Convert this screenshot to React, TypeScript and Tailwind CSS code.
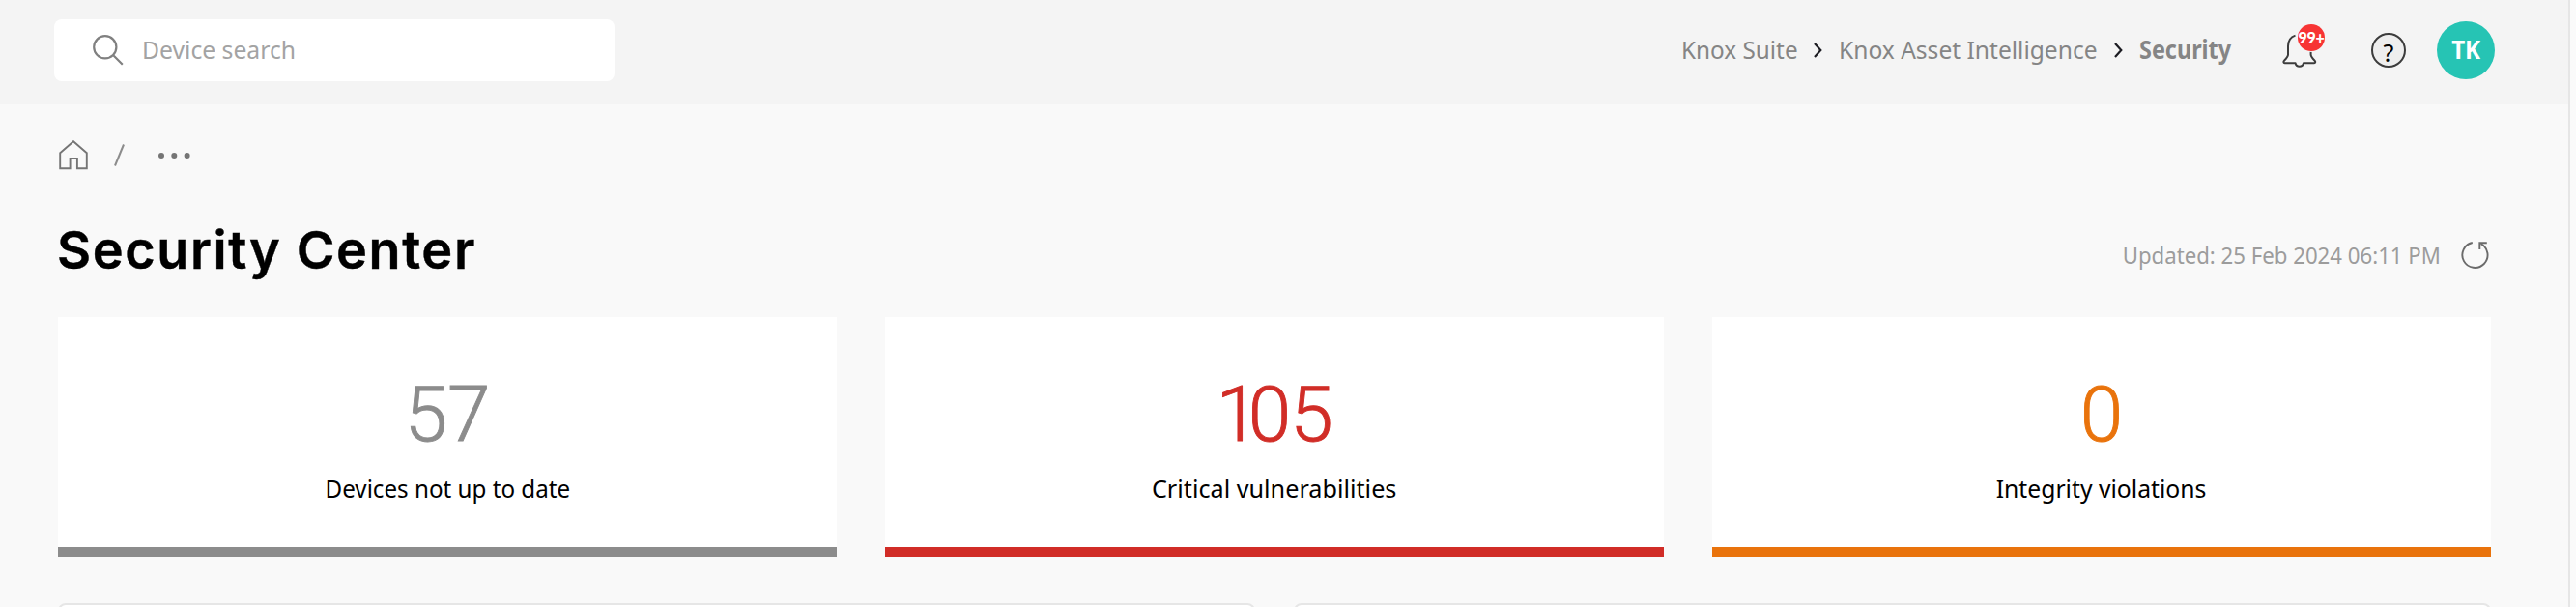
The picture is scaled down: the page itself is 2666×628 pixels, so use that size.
import React from "react";

function SearchIcon() {
  return (
    <svg className="size-8 shrink-0" viewBox="0 0 32 32" fill="none" stroke="#808080" strokeWidth="2.2">
      <circle cx="12.8" cy="12.8" r="11.6" />
      <path d="M21 21l9.8 9.8" />
    </svg>
  );
}

function HomeIcon() {
  return (
    <svg className="h-[31px] w-[30px] shrink-0" viewBox="0 0 30 31" fill="none" stroke="#757575" strokeWidth="1.9">
      <path d="M1.2 13.2L15 1.2l13.8 12v16h-9.9V19h-7.3v10.2H1.2z" />
    </svg>
  );
}

function BellIcon() {
  return (
    <svg className="h-[35px] w-[36px]" viewBox="0 0 36 35" fill="none" stroke="#3c3c3c" strokeWidth="2" strokeLinejoin="round">
      <path d="M13.5 1.6C8.5 3.2 6 7.5 6 13v8.5c0 2-1.500 3.800-4 6.200-1 1-.8 2.600.6 2.600h11c.4 2 1.700 3.500 4.200 3.500s3.800-1.500 4.200-3.500h11c1.400 0 1.600-1.600.6-2.600-2.500-2.400-4-4.200-4-6.200V18" />
    </svg>
  );
}

function Chevron() {
  return (
    <svg className="h-4 w-[9px] shrink-0" viewBox="0 0 9 16" fill="none" stroke="#1c1c22" strokeWidth="2.2">
      <path d="M1 1l6.3 7L1 15" />
    </svg>
  );
}

function RefreshIcon() {
  return (
    <svg className="h-[30px] w-[30px] shrink-0" viewBox="0 0 30 30" fill="none" stroke="#6b6b6b" strokeWidth="1.9">
      <path d="M11.8 2A13.1 13.1 0 1 0 20.5 3.2" />
      <path d="M19.3 9V2.2h7.5" />
    </svg>
  );
}

type Stat = { value: string; label: string; color: string; bar: string; fit: string };

const stats: Stat[] = [
  { value: "57", label: "Devices not up to date", color: "text-[#8c8c8c]", bar: "bg-[#8c8c8c]", fit: "scale-x-[0.93]" },
  { value: "105", label: "Critical vulnerabilities", color: "text-[#d12d27]", bar: "bg-[#d12d27]", fit: "scale-x-[0.97]" },
  { value: "0", label: "Integrity violations", color: "text-[#e9730c]", bar: "bg-[#e9730c]", fit: "scale-x-[0.95]" },
];

function StatCard({ value, label, color, bar, fit }: Stat) {
  return (
    <div className="flex h-[248px] flex-col bg-white">
      <div className="flex flex-1 flex-col items-center pt-[61px]">
        <div className={`font-['Roboto',sans-serif] text-[80px] leading-[80px] font-light [-webkit-text-stroke:0.9px_currentColor] ${color}`}>
          {value.split("").map((d, i) => (
            <span key={i} className={d === "1" ? "tracking-[-11px]" : i === 1 && d === "0" ? "mr-[3px] tracking-[-4px]" : undefined}>{d}</span>
          ))}
        </div>
        <div className={`mt-[18px] text-[26px] leading-9 text-black ${fit}`}>{label}</div>
      </div>
      <div className={`h-2.5 ${bar}`} />
    </div>
  );
}

export default function App() {
  return (
    <div className="flex h-[628px] w-[2666px] overflow-hidden bg-[#fafafa] font-['Noto_Sans',sans-serif]">
      <div className="w-[2660px] border-r-2 border-[#e6e6e6] bg-[#f9f9f9]">
        <header className="flex h-[108px] items-center bg-[#f4f4f4] pr-[76px] pb-1 pl-14">
          <div className="flex h-16 w-[580px] items-center rounded-lg bg-white pl-10">
            <SearchIcon />
            <span className="mb-0.5 ml-[19px] origin-left scale-x-[0.95] text-[26px] leading-9 text-[#a3a3a3]">Device search</span>
          </div>
          <nav className="ml-auto flex items-center text-[26px] leading-9 text-[#858585]">
            <span className="mb-0.5 w-[137px] origin-left scale-x-[0.935] whitespace-nowrap">Knox Suite</span>
            <Chevron />
            <span className="mb-0.5 ml-[17px] w-[285px] origin-left scale-x-[0.945] whitespace-nowrap">Knox Asset Intelligence</span>
            <Chevron />
            <span className="mb-0.5 ml-[17px] w-[95px] origin-left scale-x-[0.9] font-bold whitespace-nowrap">Security</span>
          </nav>
          <div className="relative ml-[53px]">
            <BellIcon />
            <div className="absolute -top-[10px] left-4 flex size-7 items-center justify-center rounded-full bg-[#f73434] font-['Lato',sans-serif] text-[16px] leading-none font-black tracking-[-0.3px] text-white ring-1 ring-[#f4f4f4]">99+</div>
          </div>
          <div className="ml-[56px] flex size-9 items-center justify-center rounded-full border-2 border-[#3c3c3c] bg-[#eeeeee] pt-1 text-[25px] leading-none text-black">?</div>
          <div className="ml-8 flex size-[60px] items-center justify-center rounded-full bg-[#26c4b4] pb-0.5 text-[26px] font-bold text-white">
            <span className="scale-x-[0.93]">TK</span>
          </div>
        </header>

        <main className="pr-20 pl-[60px]">
          <div className="flex h-[102px] items-center pt-[3px] pl-px">
            <HomeIcon />
            <svg className="ml-[27px] h-[23px] w-[11px]" viewBox="0 0 11 23" stroke="#8c8c8c" strokeWidth="2">
              <path d="M1 22.5L10 .5" />
            </svg>
            <svg className="ml-[35px] h-[6px] w-[33px]" viewBox="0 0 33 6" fill="#757575">
              <circle cx="3" cy="3" r="3" />
              <circle cx="16.3" cy="3" r="3" />
              <circle cx="29.6" cy="3" r="3" />
            </svg>
          </div>

          <div className="flex h-[118px] justify-between pt-[17px]">
            <h1 className="-ml-px font-['Inter',sans-serif] text-[54px] leading-[64px] font-semibold tracking-[1.6px] text-black [-webkit-text-stroke:0.4px_black]">Security Center</h1>
            <div className="mt-[19px] mr-px flex h-9 items-center">
              <span className="mb-px origin-right scale-x-[0.925] text-2xl leading-9 text-[#9c9c9c]">Updated: 25 Feb 2024 06:11 PM</span>
              <div className="ml-[21px]">
                <RefreshIcon />
              </div>
            </div>
          </div>

          <div className="grid grid-cols-3 gap-[50px]">
            {stats.map((s) => (
              <StatCard key={s.label} {...s} />
            ))}
          </div>

          <div className="mt-12 grid grid-cols-2 gap-10">
            <div className="h-20 rounded-lg border-2 border-[#e6e6e6] bg-white" />
            <div className="h-20 rounded-lg border-2 border-[#e6e6e6] bg-white" />
          </div>
        </main>
      </div>
    </div>
  );
}
